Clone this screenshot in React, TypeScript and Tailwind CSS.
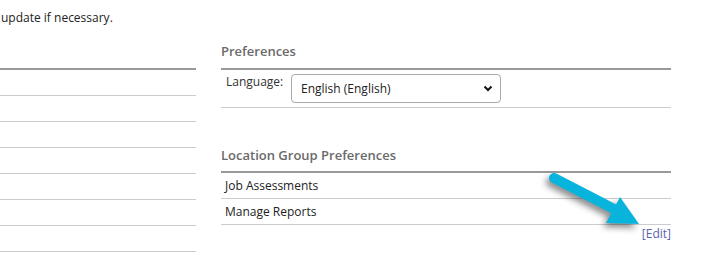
export default function App() {
  const rows = [0, 1, 2, 3, 4, 5, 6];
  return (
    <div className="relative w-[708px] h-[270px] bg-white overflow-hidden text-[12px] text-[#222]" style={{ fontFamily: '"Open Sans", "Liberation Sans", sans-serif' }}>
      <p className="pt-[10px] leading-[16px] pl-px">update if necessary.</p>
      <div className="flex gap-[25px]">
        <div className="w-[196px] mt-[42px] border-t-2 border-[#999]">
          {rows.map((r) => (
            <div key={r} className="h-[26px] border-b border-[#ccc]" />
          ))}
        </div>
        <div className="w-[450px]">
          <h2 className="mt-[15px] h-[20px] leading-[20px] text-[13px] font-semibold text-[#6a6a6a]">Preferences</h2>
          <div className="mt-[7px] border-t-2 border-[#999]">
            <div className="flex h-[38px] border-b border-[#ccc] pt-[4px]">
              <span className="pl-[5px] leading-[16px] w-[70px] text-[#333]">Language:</span>
              <div className="flex items-center justify-between w-[210px] h-[29px] border border-[#aaa] rounded-[4px] pl-[9px] pr-[7px] text-[#222]">
                <span>English (English)</span>
                <svg width="10" height="7" viewBox="0 0 10 7">
                  <path d="M1.5 1.5 L5 5 L8.5 1.5" fill="none" stroke="#111" strokeWidth="2" />
                </svg>
              </div>
            </div>
          </div>
          <h2 className="mt-[37px] h-[20px] leading-[20px] text-[13px] font-semibold text-[#6a6a6a]">Location Group Preferences</h2>
          <div className="mt-[6px] border-t-2 border-[#999]">
            <div className="h-[26px] border-b border-[#ccc] pl-[4px] leading-[25px]">Job Assessments</div>
            <div className="h-[26px] border-b border-[#ccc] pl-[4px] leading-[25px]">Manage Reports</div>
          </div>
          <div className="text-right leading-[18px] text-[#5b63ad]">[Edit]</div>
        </div>
      </div>
      <svg className="absolute left-0 top-0" width="708" height="270" style={{ filter: 'drop-shadow(-3px 4px 3px rgba(0,0,0,0.45))' }}>
        <line x1="554" y1="178" x2="614" y2="209" stroke="#08b4dc" strokeWidth="10" strokeLinecap="round" />
        <polygon points="620,197 606,223 639,224" fill="#08b4dc" />
      </svg>
    </div>
  );
}
